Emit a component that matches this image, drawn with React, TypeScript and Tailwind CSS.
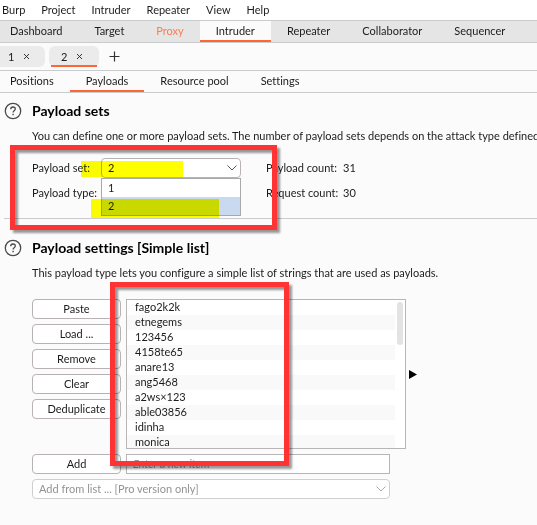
import { ReactNode } from "react";

const menus = ["Burp", "Project", "Intruder", "Repeater", "View", "Help"];
const tools = ["Dashboard", "Target", "Proxy", "Intruder", "Repeater", "Collaborator", "Sequencer"];
const pages = ["Positions", "Payloads", "Resource pool", "Settings"];
const actions = ["Paste", "Load ...", "Remove", "Clear", "Deduplicate"];
const items = [
  "fago2k2k",
  "etnegems",
  "123456",
  "4158te65",
  "anare13",
  "ang5468",
  "a2ws×123",
  "able03856",
  "idinha",
  "monica",
];

function Chevron({ className }: { className: string }) {
  return (
    <svg className={`pointer-events-none absolute right-1 top-1.5 ${className}`} width="10" height="8" viewBox="0 0 10 8" fill="none" stroke="currentColor" aria-hidden="true">
      <path d="M0.5 1.5 5 6 9.5 1.5" />
    </svg>
  );
}

function Heading({ children }: { children: ReactNode }) {
  return (
    <div className="flex h-5 items-center gap-2.5">
      <button aria-label="Help" className="text-[#4a4a4a]">
        <svg width="18" height="18" viewBox="0 0 18 18" fill="none" stroke="currentColor" aria-hidden="true">
          <circle cx="9" cy="9" r="7.7" strokeWidth="1.3" />
          <path d="M6.7 7.3c0-1.400 1-2.300 2.300-2.300s2.300.9 2.300 2.100c0 1.600-2.200 1.700-2.200 3.300" strokeWidth="1.300" />
          <path d="M9.100 11.700v1.500" strokeWidth="1.400" />
        </svg>
      </button>
      <h2 className="text-sm font-bold text-black">{children}</h2>
    </div>
  );
}

function PushButton({ children }: { children: ReactNode }) {
  return <button className="h-5 w-full rounded border border-[#b8b2b2] bg-white pb-0.5 text-center">{children}</button>;
}

function Attempt({ name, active }: { name: string; active?: boolean }) {
  return (
    <div className={`relative flex h-[21px] items-center gap-1 bg-[#ebebeb] ${active ? "w-[50px] rounded-md pl-3" : "w-[45px] rounded-r-md pl-2"}`}>
      <button>{name}</button>
      <button aria-label={`Close ${name}`} className="flex h-4 w-4 items-center justify-center">
        <svg width="7" height="7" viewBox="0 0 7 7" stroke="#222" strokeWidth="0.9" aria-hidden="true">
          <path d="M1 1 6 6M6 1 1 6" />
        </svg>
      </button>
      {active && <span className="absolute inset-x-0.5 bottom-0 h-0.5 bg-[#ff6633]" />}
    </div>
  );
}

export default function App() {
  return (
    <div className="relative min-h-screen overflow-hidden whitespace-nowrap bg-[#fbfbfb] pb-6 font-['Lato','Noto_Sans',sans-serif] text-[11px] leading-[15px] text-[#1c1c1c] [font-variant-ligatures:none]">
      <nav className="flex h-[21px] items-center gap-4 border-b border-[#c9cccc] bg-white pb-0.5 pl-0.5">
        {menus.map((m) => (
          <button key={m}>{m}</button>
        ))}
      </nav>

      <nav className="flex h-[22px] border-b border-[#c9cccc] bg-[#e5e5e5]">
        {tools.map((t, i) => (
          <button
            key={t}
            className={`px-4 ${i === 0 ? "-ml-1.5" : ""} ${t === "Intruder" ? "border-b-2 border-[#ff6633] bg-[#fbfbfb]" : "pb-0.5"} ${t === "Proxy" ? "text-[#ff7a4f]" : ""}`}
          >
            {t}
          </button>
        ))}
      </nav>

      <div className="flex h-7 items-center gap-1 border-b border-[#c9cccc]">
        <Attempt name="1" />
        <Attempt name="2" active />
        <button aria-label="New tab" className="ml-1.5 text-[#333]">
          <svg width="11" height="11" viewBox="0 0 11 11" stroke="currentColor" strokeWidth="1.200" aria-hidden="true">
            <path d="M5.500 0.500v10M0.500 5.500h10" />
          </svg>
        </button>
      </div>

      <nav className="flex h-[22px] border-b border-[#c9cccc]">
        {pages.map((p, i) => (
          <button key={p} className={`px-4 ${i === 0 ? "-ml-1.5" : ""} ${p === "Payloads" ? "border-b-2 border-[#ff6633]" : "pb-0.5"}`}>
            {p}
          </button>
        ))}
      </nav>

      <section className="ml-1 border-b border-[#c9cccc] pb-[15px] pt-2">
        <Heading>Payload sets</Heading>
        <p className="ml-7 mt-[7px]">
          You can define one or more payload sets. The number of payload sets depends on the attack type defined in the Positions tab.
        </p>
        <div className="ml-7 mt-[15px] grid grid-cols-[69px_140px_77px_auto] gap-y-[5px] leading-5">
          <label htmlFor="set">Payload set:</label>
          <div className="relative">
            <select id="set" defaultValue="2" className="h-5 w-full appearance-none rounded-sm border border-[#b8b2b2] bg-white pl-1.5 leading-[18px]">
              <option>1</option>
              <option>2</option>
            </select>
            <Chevron className="text-[#555]" />
            <ul role="listbox" aria-label="Payload set" className="absolute inset-x-0 top-5 z-10 border border-[#a9a9a9] bg-white leading-[18px]">
              <li role="option" aria-selected="false" className="pl-1.5">1</li>
              <li role="option" aria-selected="true" className="bg-[#c9d9f0] pl-1.5">2</li>
            </ul>
          </div>
          <span className="pl-[25px]">Payload count:</span>
          <span className="pl-[25px]">31</span>
          <label htmlFor="type">Payload type:</label>
          <select id="type" className="h-5 w-full appearance-none rounded-sm border border-[#b8b2b2] bg-white" />
          <span className="pl-[25px]">Request count:</span>
          <span className="pl-[25px]">30</span>
        </div>
      </section>

      <section className="ml-1 pt-[19px]">
        <Heading>Payload settings [Simple list]</Heading>
        <p className="ml-7 mt-[7px]">This payload type lets you configure a simple list of strings that are used as payloads.</p>
        <div className="ml-7 mt-[19px] flex gap-[5px]">
          <div className="flex w-[89px] flex-col gap-[5px]">
            {actions.map((a) => (
              <PushButton key={a}>{a}</PushButton>
            ))}
          </div>
          <div className="flex h-[150px] w-[280px] overflow-hidden border border-[#b8b5b5] bg-white">
            <ul className="flex-1">
              {items.map((t) => (
                <li key={t} className="mr-0.5 h-[15px] pl-2 leading-[14px] even:bg-[#f9f9f9]">{t}</li>
              ))}
            </ul>
            <div className="mr-0.5 mt-0.5 h-[43px] w-1.5 rounded-full bg-[#e3e3e3]" />
          </div>
          <svg className="-ml-0.5 self-center" width="8" height="9" viewBox="0 0 8 9" aria-hidden="true">
            <path d="M0 0v9l8-4.500z" />
          </svg>
        </div>
        <div className="ml-7 mt-[5px] flex gap-[5px]">
          <div className="w-[89px]">
            <PushButton>Add</PushButton>
          </div>
          <input
            aria-label="New item"
            placeholder="Enter a new item"
            className="h-5 w-[264px] border border-[#b8b5b5] bg-white px-1.5 pb-0.5 placeholder:italic placeholder:text-[#999]"
          />
        </div>
        <div className="relative ml-7 mt-[5px] w-[358px]">
          <select aria-label="Add from list" disabled className="h-5 w-full appearance-none rounded-sm border border-[#cfcfcf] bg-white pl-1.5 leading-[18px] text-[#939393] opacity-100">
            <option>Add from list ... [Pro version only]</option>
          </select>
          <Chevron className="text-[#aaa]" />
        </div>
      </section>

      <div className="pointer-events-none absolute left-[81px] top-[161px] z-20 h-4 w-[102px] bg-[#ffff00] mix-blend-multiply" />
      <div className="pointer-events-none absolute left-[91px] top-[199px] z-20 h-[19px] w-32 bg-[#ffff00] mix-blend-multiply" />
      <div className="pointer-events-none absolute left-2.5 top-[145px] z-20 h-[85px] w-[267px] border-[5px] border-[#ff3333] drop-shadow-[3px_3px_1px_rgba(0,0,0,0.4)]" />
      <div className="pointer-events-none absolute left-[110px] top-[282px] z-20 h-[184px] w-[179px] border-[5px] border-[#ff3333] drop-shadow-[3px_3px_1px_rgba(0,0,0,0.4)]" />
    </div>
  );
}
